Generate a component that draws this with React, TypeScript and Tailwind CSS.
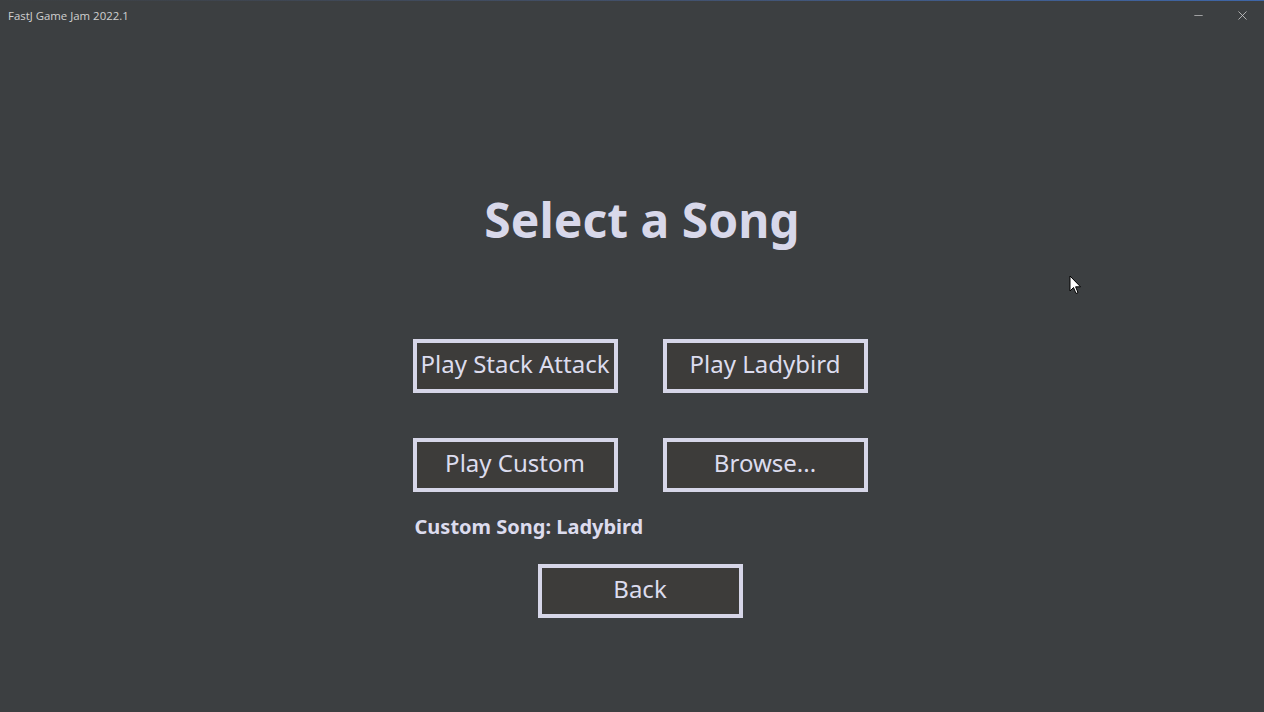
import { Minus, X } from "lucide-react";

const font = { fontFamily: '"Noto Sans", "Open Sans", sans-serif' };

function SongButton({ label }: { label: string }) {
  return (
    <button className="w-[205px] h-[54px] border-4 border-[#d6d6e8] bg-[#3d3c3a] text-[#dcdcee] text-[24px] leading-none whitespace-nowrap flex items-center justify-center pb-[4px]">
      {label}
    </button>
  );
}

export default function App() {
  return (
    <div className="relative w-[1264px] h-[712px] bg-[#3c3f41] overflow-hidden flex flex-col" style={font}>
      <div className="h-px bg-gradient-to-r from-[#3c3f41] via-[#42506a] to-[#3e66a8]" />
      <div className="h-[29px] flex items-center justify-between">
        <span className="pl-2 text-[11.4px] text-[#d0d0d0]" style={{ fontFamily: '"Open Sans", "Noto Sans", sans-serif' }}>
          FastJ Game Jam 2022.1
        </span>
        <div className="flex items-center h-full text-[#d0d0d0]">
          <div className="w-11 h-full flex items-center justify-center">
            <Minus size={13} strokeWidth={1.25} />
          </div>
          <div className="w-11 h-full flex items-center justify-center">
            <X size={15} strokeWidth={1.25} />
          </div>
        </div>
      </div>

      <main className="flex flex-col items-center pl-4">
        <h1 className="mt-[158px] text-[48px] leading-[64px] font-bold text-[#d8d8ea] ml-1">
          Select a Song
        </h1>

        <div className="mt-[87px] grid grid-cols-2 gap-x-[45px] gap-y-[45px]">
          <SongButton label="Play Stack Attack" />
          <SongButton label="Play Ladybird" />
          <SongButton label="Play Custom" />
          <SongButton label="Browse..." />
        </div>

        <div className="w-[455px] mt-[21px] pl-[2px]">
          <p className="text-[20px] leading-[28px] font-bold text-[#dcdcee]">Custom Song: Ladybird</p>
        </div>

        <div className="mt-[23px]">
          <SongButton label="Back" />
        </div>
      </main>

      <svg className="absolute left-[1069px] top-[275px]" width="13" height="20" viewBox="0 0 13 20">
        <path d="M1 1 L1 16 L4.5 12.5 L7 18.5 L9 17.6 L6.6 11.8 L11.5 11.8 Z" fill="#ffffff" stroke="#000000" strokeWidth="1" strokeLinejoin="round" />
      </svg>
    </div>
  );
}
